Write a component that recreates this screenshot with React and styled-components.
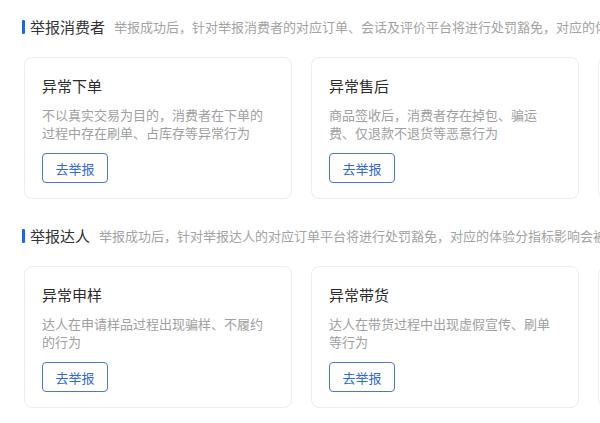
import React from 'react';
import styled, { createGlobalStyle } from 'styled-components';

const GlobalStyle = createGlobalStyle`
	html, body {
		margin: 0;
		padding: 0;
		background: #FFFFFF;
		overflow: hidden;
	}
	body {
		font-family: "Noto Sans CJK SC", "Noto Sans", sans-serif;
	}
`;

const Page = styled.div`
	width: 600px;
	height: 423px;
	overflow: hidden;
	padding: 17px 0 0 22px;
	box-sizing: border-box;
`;

const Section = styled.div`
	margin-bottom: 27px;
`;

const SectionHeader = styled.div`
	display: flex;
	align-items: center;
	height: 20px;
	white-space: nowrap;
	overflow: hidden;
`;

const Bar = styled.span`
	width: 3px;
	height: 14px;
	background: #1966FF;
	border-radius: 1px;
	margin-right: 5px;
	flex-shrink: 0;
`;

const SectionTitle = styled.span`
	font-size: 15px;
	line-height: 20px;
	color: #333333;
	flex-shrink: 0;
`;

const SectionDesc = styled.span`
	font-size: 13px;
	line-height: 20px;
	color: #A3A3A3;
	margin-left: 9px;
`;

const CardRow = styled.div`
	display: flex;
	gap: 19px;
	margin: 20px 0 0 2px;
`;

const Card = styled.div`
	flex: 0 0 268px;
	height: 142px;
	box-sizing: border-box;
	border: 1px solid #EDEDED;
	border-radius: 8px;
	padding: 17px 17px 0;
	display: flex;
	flex-direction: column;
	align-items: flex-start;
`;

const CardTitle = styled.div`
	font-size: 15px;
	line-height: 22px;
	color: #2B2B2B;
`;

const CardDesc = styled.div`
	font-size: 13px;
	line-height: 18px;
	color: #A0A0A0;
	margin-top: 9px;
	height: 36px;
`;

const ReportButton = styled.button`
	margin-top: 11px;
	width: 66px;
	height: 30px;
	box-sizing: border-box;
	border: 1px solid #4A78CC;
	border-radius: 4px;
	background: #FFFFFF;
	color: #3468DA;
	font-family: inherit;
	font-size: 13px;
	padding: 0;
	cursor: pointer;
`;

const sections = [
	{
		title: '举报消费者',
		desc: '举报成功后，针对举报消费者的对应订单、会话及评价平台将进行处罚豁免，对应的体验分指标影响会被剔除',
		cards: [
			{ title: '异常下单', desc: '不以真实交易为目的，消费者在下单的过程中存在刷单、占库存等异常行为' },
			{ title: '异常售后', desc: '商品签收后，消费者存在掉包、骗运费、仅退款不退货等恶意行为' },
		],
	},
	{
		title: '举报达人',
		desc: '举报成功后，针对举报达人的对应订单平台将进行处罚豁免，对应的体验分指标影响会被剔除',
		cards: [
			{ title: '异常申样', desc: '达人在申请样品过程出现骗样、不履约的行为' },
			{ title: '异常带货', desc: '达人在带货过程中出现虚假宣传、刷单等行为' },
		],
	},
];

const App = () => {
	return (
		<Page>
			<GlobalStyle />
			{sections.map((section) => (
				<Section key={section.title}>
					<SectionHeader>
						<Bar />
						<SectionTitle>{section.title}</SectionTitle>
						<SectionDesc>{section.desc}</SectionDesc>
					</SectionHeader>
					<CardRow>
						{section.cards.map((card) => (
							<Card key={card.title}>
								<CardTitle>{card.title}</CardTitle>
								<CardDesc>{card.desc}</CardDesc>
								<ReportButton>去举报</ReportButton>
							</Card>
						))}
						<Card />
					</CardRow>
				</Section>
			))}
		</Page>
	);
};

export default App;
